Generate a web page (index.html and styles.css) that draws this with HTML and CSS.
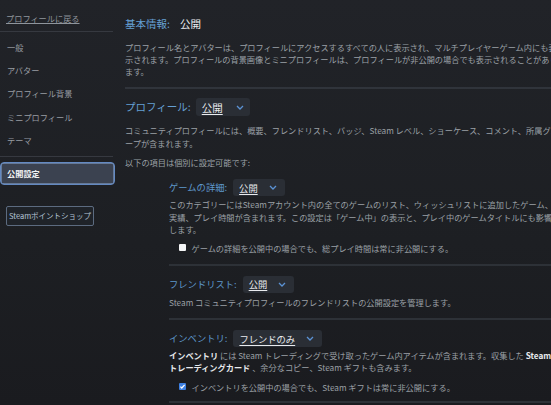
FILE: index.html
```html
<!DOCTYPE html>
<html lang="ja">
<head>
<meta charset="utf-8">
<title>公開設定</title>
<link rel="stylesheet" href="styles.css">
</head>
<body>
<div class="page">
  <nav class="sidebar">
    <a class="back" href="#">プロフィールに戻る</a>
    <div class="side-divider"></div>
    <ul class="side-list">
      <li>一般</li>
      <li>アバター</li>
      <li>プロフィール背景</li>
      <li>ミニプロフィール</li>
      <li>テーマ</li>
    </ul>
    <div class="side-divider"></div>
    <div class="side-active">公開設定</div>
    <button class="shop-btn">Steamポイントショップ</button>
  </nav>

  <main class="main">
    <section class="section basic">
      <h2 class="h-main">基本情報:<span class="h-value">公開</span></h2>
      <p class="desc desc-basic">プロフィール名とアバターは、プロフィールにアクセスするすべての人に表示され、マルチプレイヤーゲーム内にも表示されます。プロフィールの背景画像とミニプロフィールは、プロフィールが非公開の場合でも表示されることがあります。</p>
    </section>

    <section class="section profile">
      <div class="row">
        <span class="h-main">プロフィール:</span>
        <span class="dropdown dd-main"><span class="dd-text">公開</span><svg class="chev" width="8" height="5" viewBox="0 0 8 5"><path d="M1 1l3 3 3-3" fill="none" stroke="#5b92d4" stroke-width="1.3"/></svg></span>
      </div>
      <p class="desc desc-profile">コミュニティプロフィールには、概要、フレンドリスト、バッジ、Steam レベル、ショーケース、コメント、所属グループが含まれます。</p>
      <p class="desc desc-note">以下の項目は個別に設定可能です:</p>

      <div class="subs">
        <div class="sub sub-games">
          <div class="row">
            <span class="h-sub">ゲームの詳細:</span>
            <span class="dropdown dd-sub"><span class="dd-text">公開</span><svg class="chev" width="8" height="5" viewBox="0 0 8 5"><path d="M1 1l3 3 3-3" fill="none" stroke="#5b92d4" stroke-width="1.3"/></svg></span>
          </div>
          <p class="desc sub-desc">このカテゴリーにはSteamアカウント内の全てのゲームのリスト、ウィッシュリストに追加したゲーム、実績、プレイ時間が含まれます。この設定は「ゲーム中」の表示と、プレイ中のゲームタイトルにも影響します。</p>
          <div class="check">
            <span class="box"></span>
            <span class="check-text">ゲームの詳細を公開中の場合でも、総プレイ時間は常に非公開にする。</span>
          </div>
        </div>

        <div class="sub sub-friends">
          <div class="row">
            <span class="h-sub">フレンドリスト:</span>
            <span class="dropdown dd-sub"><span class="dd-text">公開</span><svg class="chev" width="8" height="5" viewBox="0 0 8 5"><path d="M1 1l3 3 3-3" fill="none" stroke="#5b92d4" stroke-width="1.3"/></svg></span>
          </div>
          <p class="desc sub-desc">Steam コミュニティプロフィールのフレンドリストの公開設定を管理します。</p>
        </div>

        <div class="sub sub-inv">
          <div class="row">
            <span class="h-sub">インベントリ:</span>
            <span class="dropdown dd-sub"><span class="dd-text">フレンドのみ</span><svg class="chev" width="8" height="5" viewBox="0 0 8 5"><path d="M1 1l3 3 3-3" fill="none" stroke="#5b92d4" stroke-width="1.3"/></svg></span>
          </div>
          <p class="desc sub-desc"><b>インベントリ</b> には Steam トレーディングで受け取ったゲーム内アイテムが含まれます。収集した <b>Steam トレーディングカード</b> 、余分なコピー、Steam ギフトも含みます。</p>
          <div class="check">
            <span class="box checked"><svg width="7" height="7" viewBox="0 0 7 7"><path d="M1.4 3.6l1.4 1.4 2.8-3.2" fill="none" stroke="#fff" stroke-width="1.2"/></svg></span>
            <span class="check-text">インベントリを公開中の場合でも、Steam ギフトは常に非公開にする。</span>
          </div>
        </div>
      </div>
    </section>
  </main>
</div>
</body>
</html>
```

FILE: styles.css
```css
* { box-sizing: border-box; }

html, body {
  margin: 0;
  padding: 0;
  width: 551px;
  height: 405px;
  overflow: hidden;
}

body {
  background: linear-gradient(180deg, #212328 0%, #1d1f23 60%, #1a1b1f 100%);
  font-family: "Noto Sans CJK JP", "Noto Sans", sans-serif;
  color: #9ba0a6;
}

.page {
  display: flex;
  align-items: flex-start;
}

/* Sidebar */
.sidebar {
  flex: 0 0 115px;
  width: 115px;
  padding-top: 11px;
  display: flex;
  flex-direction: column;
  font-size: 8.2px;
}

.back {
  color: #8f959c;
  text-decoration: underline;
  line-height: 14px;
  padding-left: 6px;
}

.side-divider {
  height: 1px;
  background: #363940;
  margin: 6px 2px 0 0;
}

.side-list {
  list-style: none;
  margin: 4px 0 0 0;
  padding: 0;
}

.side-list li {
  height: 23.2px;
  line-height: 23.2px;
  padding-left: 7px;
  color: #989da3;
}

.side-list + .side-divider {
  margin-top: 4px;
}

.side-active {
  margin-top: 5px;
  height: 23.5px;
  line-height: 21.5px;
  padding-left: 6px;
  border: 1px solid #6389c2;
  border-radius: 4px;
  background: #3b4250;
  color: #f2f3f5;
  font-weight: bold;
  box-shadow: 0 0 0 0.5px #8fb0de inset;
}

.shop-btn {
  align-self: flex-start;
  margin: 21px 0 0 6px;
  width: 88px;
  height: 20px;
  padding: 0;
  border: 1px solid #5c6b80;
  border-radius: 2px;
  background: #1f2329;
  color: #b5c3d6;
  font-family: "Noto Sans CJK JP", "Noto Sans", sans-serif;
  font-size: 7.5px;
  line-height: 18px;
}

/* Main */
.main {
  flex: 0 0 435px;
  width: 435px;
  margin-left: 10px;
  padding-top: 16px;
}

.section.basic {
  padding-bottom: 10px;
  border-bottom: 2px solid #30343b;
}

.h-main {
  margin: 0;
  font-size: 10.5px;
  font-weight: normal;
  line-height: 16px;
  color: #65a0d4;
}

.h-value {
  color: #eceef0;
  margin-left: 10px;
}

.desc {
  margin: 0;
  font-size: 8.2px;
  line-height: 12.5px;
  color: #9ba0a6;
}

.desc-basic {
  margin-top: 9px;
  line-height: 12px;
}

.section.profile {
  padding-top: 9px;
}

.row {
  display: flex;
  align-items: center;
}

.dropdown {
  display: inline-flex;
  align-items: center;
  background: #2a2e35;
  border-radius: 3px;
  color: #e9ebee;
}

.dd-text {
  text-decoration: underline;
  text-underline-offset: 1.5px;
}

.dd-main {
  height: 18px;
  margin-left: 5px;
  padding: 0 6px 0 6px;
  font-size: 10.5px;
  gap: 13px;
}

.dd-sub {
  height: 17px;
  margin-left: 6px;
  padding: 0 8px 0 6px;
  font-size: 9.3px;
  gap: 11px;
}

.desc-profile {
  margin-top: 8px;
}

.desc-note {
  margin-top: 7px;
}

.subs {
  margin-left: 44px;
}

.sub {
  border-bottom: 2px solid #2d3137;
}

.h-sub {
  font-size: 9.3px;
  line-height: 17px;
  color: #5e98cc;
}

.sub-games { padding: 10.5px 0 10px; }
.sub-friends { padding: 9.5px 0 9.5px; }
.sub-inv { padding: 10.5px 0 8px; }

.sub-games .sub-desc { margin-top: 2px; }
.sub-friends .sub-desc { margin-top: 3px; }
.sub-inv .sub-desc { margin-top: 1.5px; }

.sub-desc b {
  color: #e8eaed;
  font-weight: bold;
}

.check {
  display: flex;
  align-items: center;
  padding-left: 10px;
  margin-top: 6px;
  font-size: 8.2px;
  line-height: 12.5px;
  color: #9ba0a6;
}

.sub-inv .check { margin-top: 7px; }

.box {
  width: 7px;
  height: 7px;
  border-radius: 1px;
  background: #f4f5f6;
  margin-right: 5.5px;
  display: inline-flex;
}

.box.checked {
  background: #3d7fe0;
}
```
